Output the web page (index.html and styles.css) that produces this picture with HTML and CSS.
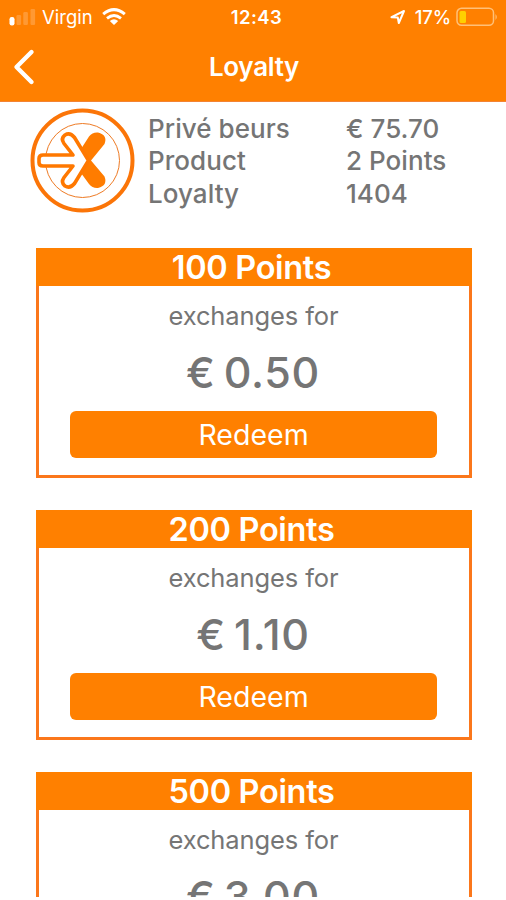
FILE: index.html
```html
<!DOCTYPE html>
<html lang="en">
<head>
<meta charset="utf-8">
<title>Loyalty</title>
<link rel="stylesheet" href="styles.css">
</head>
<body>
<div class="screen">
  <header class="top">
    <div class="status">
      <div class="status-left">
        <svg class="signal" width="28" height="18" viewBox="0 0 28 18" fill="#fff">
          <rect x="0.5" y="9" width="5" height="8.5" rx="2.2"/>
          <g opacity=".2"><rect x="7.5" y="7" width="4.6" height="10" rx="1.2"/><rect x="14.3" y="4" width="4.6" height="13" rx="1.2"/><rect x="21.5" y="1" width="4.6" height="16" rx="1.2"/></g>
        </svg>
        <span class="carrier">Virgin</span>
        <svg class="wifi" width="24" height="18" viewBox="0 0 24 18" fill="none" stroke="#fff">
          <path d="M1.2 6.2Q12-3 22.8 6.2" stroke-width="3"/>
          <path d="M5 10.4Q12 4.6 19 10.4" stroke-width="2.8"/>
          <path d="M12 17L7.8 12.9Q12 9.8 16.2 12.9Z" fill="#fff" stroke="none"/>
        </svg>
      </div>
      <span class="time">12:43</span>
      <div class="status-right">
        <svg class="locate" width="16" height="16" viewBox="0 0 16 16" fill="none" stroke="#fff" stroke-width="2" stroke-linejoin="round"><path d="M1.5 8.2L14 2L8.8 14L7.8 8.6Z"/></svg>
        <span class="percent">17%</span>
        <svg class="battery" width="43" height="20" viewBox="0 0 43 20">
          <rect x="1" y="1.3" width="36.5" height="17" rx="4.5" fill="none" stroke="#ffc078" stroke-width="1.5"/>
          <rect x="3.5" y="4" width="6.5" height="12" rx="1.5" fill="#ffd000"/>
          <path d="M39.5 7q2.6 2.8 0 6z" fill="#ffc078"/>
        </svg>
      </div>
    </div>
    <nav class="nav">
      <svg class="back" width="24" height="38" viewBox="0 0 24 38" fill="none" stroke="#fff" stroke-width="4.4" stroke-linecap="round" stroke-linejoin="round"><path d="M19.5 4L4.500 19L19.500 34"/></svg>
      <h1 class="title">Loyalty</h1>
      <span class="nav-end"></span>
    </nav>
  </header>
  <section class="account">
    <svg class="logo" width="106" height="106" viewBox="0 0 106 106">
      <circle cx="53.5" cy="52.5" r="50" fill="#fff" stroke="#fb7508" stroke-width="4"/>
      <circle cx="53.5" cy="52.5" r="37" fill="none" stroke="#ee7b25" stroke-width="1"/>
      <path d="M52 41L60 28.500Q63.500 24 69 24.500Q79 27 75.500 36L62 52.500L75.500 68.500Q79 77.500 69 80Q63.500 80.500 60 76L52 65Z" fill="#ff7c00"/>
      <path d="M59.5 52.500L45.500 29.500Q41 24 36 27Q31.500 30.500 35 35.500L44 47H14Q10 47 10 50.500V54.500Q10 58 14 58H44L35 69.500Q31.500 74.500 36 78Q41 81 45.500 75.500Z" fill="#fff" stroke="#ff7800" stroke-width="3.6" stroke-linejoin="round"/>
    </svg>
    <dl class="facts">
      <dt class="fact-name">Privé beurs</dt><dd class="fact-value">€ 75.70</dd>
      <dt class="fact-name">Product</dt><dd class="fact-value">2 Points</dd>
      <dt class="fact-name">Loyalty</dt><dd class="fact-value">1404</dd>
    </dl>
  </section>
  <main class="rewards">
    <article class="card">
      <h2 class="points">100 Points</h2>
      <p class="note">exchanges for</p>
      <p class="price">€ 0.50</p>
      <button class="redeem">Redeem</button>
    </article>
    <article class="card">
      <h2 class="points">200 Points</h2>
      <p class="note">exchanges for</p>
      <p class="price">€ 1.10</p>
      <button class="redeem">Redeem</button>
    </article>
    <article class="card">
      <h2 class="points">500 Points</h2>
      <p class="note">exchanges for</p>
      <p class="price">€ 3.00</p>
    </article>
  </main>
</div>
</body>
</html>
```

FILE: styles.css
```css
* { box-sizing: border-box; margin: 0; padding: 0; }
html, body { height: 900px; overflow: hidden; background: #fff; }
body { font-family: Inter, "Liberation Sans", sans-serif; color: #757575; }
svg { display: block; flex: none; }
.screen { width: 506px; height: 897px; overflow: hidden; }
.top { height: 102px; background: #ff8000; color: #fff; border-bottom: 1px solid #f38434; }
.status { display: grid; grid-template-columns: 1fr auto 1fr; align-items: center; height: 33px; padding: 0 7px 0 9px; }
.status-left, .status-right { display: flex; align-items: center; }
.status-right { justify-content: flex-end; }
.carrier { margin-left: 5px; font-size: 18.5px; }
.wifi { margin-left: 9px; }
.time { padding-left: 5px; font-size: 18.5px; font-weight: 600; letter-spacing: .4px; }
.locate { margin-right: 9px; }
.percent { font-size: 18.5px; font-weight: 500; letter-spacing: -.1px; margin-right: 5px; }
.nav { display: grid; grid-template-columns: 24px 1fr 24px; align-items: center; height: 68px; padding: 0 12px; }
.title { font-size: 26px; font-weight: 600; line-height: 32px; text-align: center; letter-spacing: -.3px; padding-left: 2px; }
.account { display: flex; height: 146px; padding: 6px 0 0 29px; }
.facts { display: grid; grid-template-columns: 198px auto; grid-auto-rows: 32.3px; margin: 5px 0 0 13px; font-size: 26px; font-weight: 500; line-height: 32px; letter-spacing: .05px; white-space: nowrap; }
.rewards { display: flex; flex-direction: column; gap: 32px; padding: 0 34.5px 0 35.5px; }
.card { flex: none; height: 230px; border: 3px solid #fb771b; border-top: 0; text-align: center; }
.points { height: 37.5px; margin: 0 -3px; padding-right: 4px; background: #ff8000; color: #fff; font-size: 32.5px; font-weight: 600; line-height: 39px; letter-spacing: -.35px; }
.note { margin-top: 14.5px; font-size: 25.5px; line-height: 32px; letter-spacing: -.1px; }
.price { margin-top: 13px; padding-right: 1px; font-size: 43px; font-weight: 500; line-height: 54px; letter-spacing: .7px; word-spacing: -4px; }
.redeem { display: block; width: 367px; height: 47px; margin: 12px 0 0 31.5px; border: 0; border-radius: 6px; background: #ff8000; color: #fff; font: 400 28.5px/47px Inter, "Liberation Sans", sans-serif; }
```
